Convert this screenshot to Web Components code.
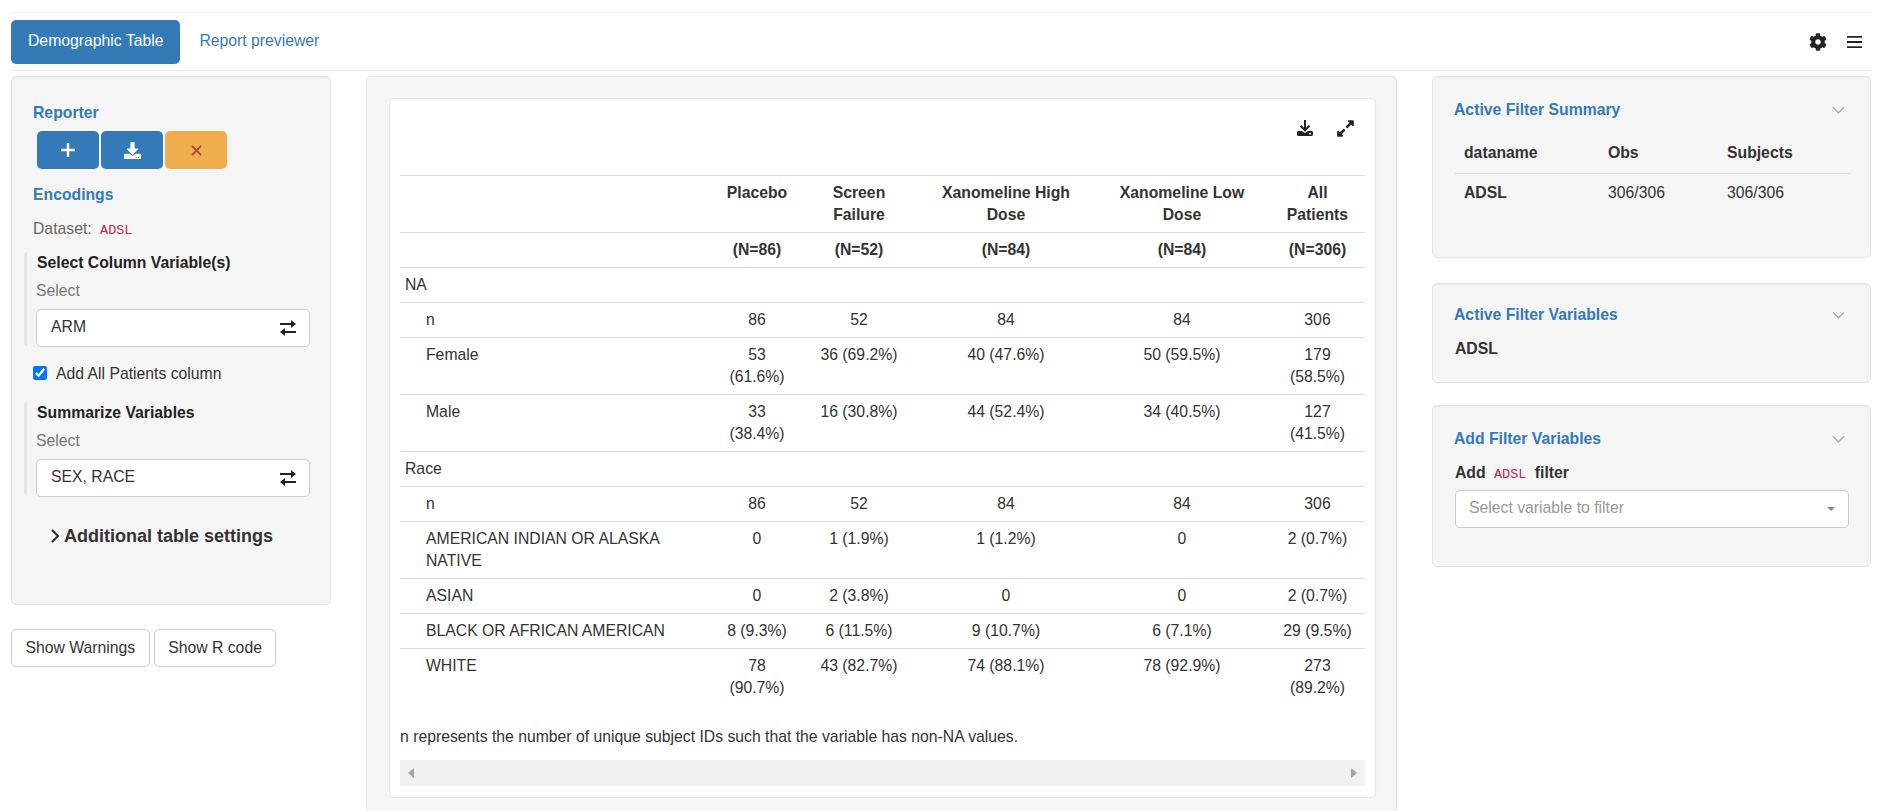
<!DOCTYPE html>
<html lang="en">
<head>
<meta charset="utf-8">
<title>Demographic Table</title>
<style>
  html, body { margin: 0; height: 811px; overflow: hidden; background: #fff; }
  body { font: 15.75px/22px "Liberation Sans", Arial, sans-serif; color: #333; }
</style>
</head>
<body>
<app-shell>
  <top-nav slot="nav">
    <nav-tab active>Demographic Table</nav-tab>
    <nav-tab>Report previewer</nav-tab>
  </top-nav>

  <well-box slot="left" class="encodings">
    <section-title>Reporter</section-title>
    <reporter-buttons></reporter-buttons>
    <section-title>Encodings</section-title>
    <dataset-line label="Dataset:" name="ADSL"></dataset-line>
    <var-select title="Select Column Variable(s)" value="ARM"></var-select>
    <check-line>Add All Patients column</check-line>
    <var-select title="Summarize Variables" value="SEX, RACE"></var-select>
    <more-settings>Additional table settings</more-settings>
  </well-box>
  <outline-button slot="left">Show Warnings</outline-button>
  <outline-button slot="left">Show R code</outline-button>

  <table-panel slot="main"></table-panel>

  <filter-card slot="right" title="Active Filter Summary" size="182" top="22" gap="25"><filter-summary></filter-summary></filter-card>
  <filter-card slot="right" title="Active Filter Variables" size="100" top="20" gap="22"><b>ADSL</b></filter-card>
  <filter-card slot="right" title="Add Filter Variables" size="162" top="22" gap="0"><add-filter></add-filter></filter-card>
</app-shell>

<script>
const ICONS = {
  download: `<svg viewBox="0 0 512 512"><path fill="currentColor" d="M216 0h80c13.3 0 24 10.7 24 24v168h87.7c17.8 0 26.7 21.5 14.1 34.1L269.7 378.3c-7.5 7.5-19.8 7.5-27.3 0L90.1 226.1c-12.6-12.6-3.7-34.1 14.1-34.1H192V24c0-13.3 10.7-24 24-24zm296 376v112c0 13.3-10.7 24-24 24H24c-13.3 0-24-10.7-24-24V376c0-13.3 10.7-24 24-24h146.7l49 49c20.1 20.1 52.5 20.1 72.6 0l49-49H488c13.3 0 24 10.7 24 24zm-124 88c0-11-9-20-20-20s-20 9-20 20 9 20 20 20 20-9 20-20zm64 0c0-11-9-20-20-20s-20 9-20 20 9 20 20 20 20-9 20-20z"/></svg>`,
  downloadThin: `<svg viewBox="0 0 16 16"><path fill="none" stroke="currentColor" stroke-width="2" d="M8 0v10M3.500 5.800L8 10.300l4.500-4.500"/><path fill="currentColor" fill-rule="evenodd" d="M1.500 11h3.300L8 13l3.200-2h3.300c.8 0 1.500.7 1.500 1.500v2c0 .8-.7 1.500-1.500 1.500h-13C.7 16 0 15.300 0 14.500v-2c0-.8.7-1.500 1.500-1.500zm11.500 1.800a.9.9 0 100 1.800.9.9 0 000-1.800z"/></svg>`,
  exchange: `<svg viewBox="0 0 16 16"><path fill="currentColor" d="M0 3h11V0l5 4-5 4V5H0zM16 11H5V8l-5 4 5 4v-3h11z"/></svg>`,
  cog: `<svg viewBox="0 0 512 512"><path fill="currentColor" d="M487.4 315.7l-42.6-24.6c4.3-23.2 4.3-47 0-70.2l42.6-24.6c4.9-2.8 7.1-8.6 5.5-14-11.1-35.6-30-67.8-54.7-94.6-3.8-4.1-10-5.1-14.8-2.3L380.8 110c-17.9-15.4-38.5-27.3-60.8-35.1V25.8c0-5.6-3.9-10.5-9.4-11.7-36.7-8.2-74.3-7.8-109.2 0-5.5 1.2-9.4 6.1-9.4 11.7V75c-22.2 7.9-42.8 19.8-60.8 35.1L88.7 85.5c-4.9-2.8-11-1.9-14.8 2.3-24.7 26.7-43.6 58.9-54.7 94.6-1.7 5.4.6 11.2 5.5 14L67.3 221c-4.3 23.2-4.3 47 0 70.2l-42.6 24.6c-4.9 2.8-7.1 8.6-5.5 14 11.1 35.6 30 67.8 54.7 94.6 3.8 4.1 10 5.1 14.8 2.3l42.6-24.6c17.9 15.4 38.5 27.3 60.8 35.1v49.2c0 5.6 3.9 10.5 9.4 11.7 36.7 8.2 74.3 7.8 109.2 0 5.5-1.2 9.4-6.1 9.4-11.7v-49.2c22.2-7.9 42.8-19.8 60.8-35.1l42.6 24.6c4.9 2.8 11 1.9 14.8-2.3 24.7-26.7 43.6-58.9 54.7-94.6 1.5-5.5-.7-11.3-5.6-14.1zM256 336c-44.1 0-80-35.9-80-80s35.9-80 80-80 80 35.9 80 80-35.9 80-80 80z"/></svg>`,
  expand: `<svg viewBox="0 0 448 512"><path fill="currentColor" d="M212.686 315.314L120 408l32.922 31.029c15.12 15.12 4.412 40.971-16.97 40.971h-112C10.697 480 0 469.255 0 456V344c0-21.382 25.803-32.09 40.922-16.971L72 360l92.686-92.686c6.248-6.248 16.379-6.248 22.627 0l25.373 25.373c6.249 6.248 6.249 16.378 0 22.627zm22.628-118.628L328 104l-32.922-31.029C279.958 57.851 290.666 32 312.048 32h112C437.303 32 448 42.745 448 56v112c0 21.382-25.803 32.09-40.922 16.971L376 152l-92.686 92.686c-6.248 6.248-16.379 6.248-22.627 0l-25.373-25.373c-6.249-6.248-6.249-16.378 0-22.627z"/></svg>`,
  bars: `<svg viewBox="0 0 16 14"><path fill="none" stroke="currentColor" stroke-width="2" d="M0 1.5h16M0 7h16M0 12.500h16"/></svg>`,
  plus: `<svg viewBox="0 0 14 14"><path fill="none" stroke="currentColor" stroke-width="2.400" d="M7 0v14M0 7h14"/></svg>`,
  times: `<svg viewBox="0 0 12 12"><path fill="none" stroke="currentColor" stroke-width="1.900" d="M1 1l10 10M11 1L1 11"/></svg>`,
  chevronDown: `<svg viewBox="0 0 14 8"><path fill="none" stroke="currentColor" stroke-width="1.300" d="M1 1l6 6 6-6"/></svg>`,
  chevronRight: `<svg viewBox="0 0 8 14"><path fill="none" stroke="currentColor" stroke-width="2.200" d="M1 1l6 6-6 6"/></svg>`,
};

class ShadowBase extends HTMLElement {
  connectedCallback() {
    if (!this.shadowRoot) this.attachShadow({ mode: "open" });
    this.shadowRoot.innerHTML = this.render();
  }
}

class AppShell extends ShadowBase {
  render() {
    return `<style>
      :host { display: block; padding: 12px 14px 0 11px; }
      .cols { display: grid; grid-template-columns: 320px 1031px 439px; column-gap: 35px; align-items: start; margin-top: 5px; }
    </style>
    <slot name="nav"></slot>
    <div class="cols">
      <div><slot name="left"></slot></div>
      <div><slot name="main"></slot></div>
      <div><slot name="right"></slot></div>
    </div>`;
  }
}

class TopNav extends ShadowBase {
  render() {
    return `<style>
      :host { display: flex; align-items: center; height: 59px; box-sizing: border-box; border-top: 1px solid #eee; border-bottom: 1px solid #e7e7e7; }
      .tabs { display: flex; gap: 2px; flex: 1; }
      .icons { display: flex; align-items: center; gap: 20px; padding-right: 10px; color: #222; }
      .cog { width: 18px; height: 18px; display: block; }
      .bars { width: 15px; height: 14px; display: block; }
      svg { display: block; width: 100%; height: 100%; }
    </style>
    <div class="tabs"><slot></slot></div>
    <div class="icons"><span class="cog">${ICONS.cog}</span><span class="bars">${ICONS.bars}</span></div>`;
  }
}

class NavTab extends ShadowBase {
  render() {
    return `<style>
      :host { display: block; padding: 10px 17px 12px; height: 22px; border-radius: 5px; color: #337ab7; }
      :host([active]) { background: #337ab7; color: #fff; }
    </style><slot></slot>`;
  }
}

class WellBox extends ShadowBase {
  render() {
    return `<style>
      :host { display: block; box-sizing: border-box; height: 529px; padding: 25px 24px 0 12px; background: #f5f5f5; border: 1px solid #e3e3e3; border-radius: 5px; box-shadow: inset 0 1px 1px rgba(0,0,0,.05); margin-bottom: 24px; }
    </style><slot></slot>`;
  }
}

class SectionTitle extends ShadowBase {
  render() {
    return `<style>
      :host { display: block; padding-left: 9px; font-weight: 700; color: #337ab7; line-height: 22px; }
    </style><slot></slot>`;
  }
}

class ReporterButtons extends ShadowBase {
  render() {
    return `<style>
      :host { display: flex; gap: 2px; margin: 7px 0 15px 13px; }
      div { width: 62px; height: 38px; border-radius: 5px; background: #337ab7; color: #fff; display: flex; align-items: center; justify-content: center; }
      div.warn { background: #f0ad4e; color: #a94442; }
      span { display: block; }
      svg { display: block; width: 100%; height: 100%; }
    </style>
    <div><span style="width:14px;height:14px">${ICONS.plus}</span></div>
    <div><span style="width:17px;height:17px">${ICONS.download}</span></div>
    <div class="warn"><span style="width:11px;height:11px">${ICONS.times}</span></div>`;
  }
}

class DatasetLine extends ShadowBase {
  render() {
    return `<style>
      :host { display: block; padding-left: 9px; color: #666; margin: 12px 0 -1px; line-height: 22px; }
      code { font: 13.500px "Liberation Mono", monospace; color: #c7254e; margin-left: 4px; }
    </style>${this.getAttribute("label")} <code>${this.getAttribute("name")}</code>`;
  }
}

class VarSelect extends ShadowBase {
  render() {
    return `<style>
      :host { display: block; box-sizing: border-box; height: 94px; margin-top: 13px; padding-left: 9px; border-left: 3px solid #e6e6e6; border-radius: 3px; }
      .title { font-weight: 700; line-height: 22px; padding-left: 1px; color: #222; }
      .label { color: #777; line-height: 22px; margin-top: 6px; }
      .box { display: flex; align-items: center; justify-content: space-between; box-sizing: border-box; height: 38px; width: 274px; margin-top: 7px; padding: 0 13px 0 14px; background: #fff; border: 1px solid #ccc; border-radius: 5px; }
      .val { position: relative; top: -1px; }
      .ico { width: 16px; height: 16px; color: #222; }
      svg { display: block; width: 100%; height: 100%; }
    </style>
    <div class="title">${this.getAttribute("title")}</div>
    <div class="label">Select</div>
    <div class="box"><span class="val">${this.getAttribute("value")}</span><span class="ico">${ICONS.exchange}</span></div>`;
  }
}

class CheckLine extends ShadowBase {
  render() {
    return `<style>
      :host { display: flex; align-items: center; height: 22px; margin: 16px 0 18px 9px; gap: 9px; }
      input { width: 14px; height: 14px; margin: 0; accent-color: #0075ff; }
      span { padding-top: 1px; }
    </style><input type="checkbox" checked><span><slot></slot></span>`;
  }
}

class MoreSettings extends ShadowBase {
  render() {
    return `<style>
      :host { display: flex; align-items: center; gap: 5px; margin: 28px 0 0 27px; font-size: 18px; font-weight: 700; line-height: 24px; color: #333; }
      span { width: 8px; height: 14px; display: block; }
      svg { display: block; width: 100%; height: 100%; }
    </style><span>${ICONS.chevronRight}</span><slot></slot>`;
  }
}

class OutlineButton extends ShadowBase {
  render() {
    return `<style>
      :host { display: inline-block; box-sizing: border-box; height: 38px; padding: 7px 13.5px; margin-right: 4px; background: #fff; border: 1px solid #ccc; border-radius: 5px; color: #333; }
    </style><slot></slot>`;
  }
}

const HEAD = [
  ["Placebo", "(N=86)"],
  ["Screen Failure", "(N=52)"],
  ["Xanomeline High Dose", "(N=84)"],
  ["Xanomeline Low Dose", "(N=84)"],
  ["All Patients", "(N=306)"],
];
const ROWS = [
  ["NA"],
  ["n", "86", "52", "84", "84", "306"],
  ["Female", "53 (61.6%)", "36 (69.2%)", "40 (47.6%)", "50 (59.5%)", "179 (58.5%)"],
  ["Male", "33 (38.4%)", "16 (30.8%)", "44 (52.4%)", "34 (40.5%)", "127 (41.5%)"],
  ["Race"],
  ["n", "86", "52", "84", "84", "306"],
  ["AMERICAN INDIAN OR ALASKA NATIVE", "0", "1 (1.9%)", "1 (1.2%)", "0", "2 (0.7%)"],
  ["ASIAN", "0", "2 (3.8%)", "0", "0", "2 (0.7%)"],
  ["BLACK OR AFRICAN AMERICAN", "8 (9.3%)", "6 (11.5%)", "9 (10.7%)", "6 (7.1%)", "29 (9.5%)"],
  ["WHITE", "78 (90.7%)", "43 (82.7%)", "74 (88.1%)", "78 (92.9%)", "273 (89.2%)"],
];

class DemoTable extends ShadowBase {
  render() {
    const head = HEAD.map(h => `<th>${h[0]}</th>`).join("");
    const ns = HEAD.map(h => `<th>${h[1]}</th>`).join("");
    const rows = ROWS.map(r => r.length === 1
      ? `<tr><td class="group" colspan="6">${r[0]}</td></tr>`
      : `<tr><td class="label">${r[0]}</td>${r.slice(1).map(c => `<td>${c}</td>`).join("")}</tr>`).join("");
    return `<style>
      :host { display: block; }
      table { table-layout: fixed; width: 965px; border-collapse: collapse; color: #333; }
      th, td { box-sizing: border-box; padding: 6px 9px; line-height: 22px; text-align: center; vertical-align: top; border-top: 1px solid #ddd; }
      td.group { text-align: left; padding-left: 5px; }
      td.label { text-align: left; padding-left: 26px; padding-right: 30px; }
    </style>
    <table>
      <colgroup><col style="width:314px"><col style="width:86px"><col style="width:118px"><col style="width:176px"><col style="width:176px"><col style="width:95px"></colgroup>
      <thead><tr><th></th>${head}</tr><tr><th></th>${ns}</tr></thead>
      <tbody>${rows}</tbody>
    </table>`;
  }
}

class TablePanel extends ShadowBase {
  render() {
    return `<style>
      :host { display: block; box-sizing: border-box; height: 760px; padding: 22px 21px 22px 23px; background: #f5f5f5; border: 1px solid #e3e3e3; border-radius: 5px; }
      .card { box-sizing: border-box; height: 698px; padding: 21px 10px 0; background: #fff; border-radius: 4px; box-shadow: 0 0 2px rgba(0,0,0,.2); }
      .tools { display: flex; justify-content: flex-end; gap: 23px; height: 55px; padding-right: 10px; color: #222; }
      .tools span { display: block; height: 19px; }
      .tools .dl { width: 16px; height: 16px; }
      .tools .ex { width: 19px; margin-top: -1px; }
      svg { display: block; width: 100%; height: 100%; overflow: visible; }
      .note { margin-top: 21px; }
      .scroll { display: flex; justify-content: space-between; align-items: center; height: 26px; margin-top: 12px; padding: 0 8px; background: #f1f1f1; }
      .scroll i { width: 0; height: 0; border: 5px solid transparent; }
      .scroll .l { border-right: 6px solid #a3a3a3; border-left: 0; }
      .scroll .r { border-left: 6px solid #a3a3a3; border-right: 0; }
    </style>
    <div class="card">
      <div class="tools"><span class="dl">${ICONS.downloadThin}</span><span class="ex">${ICONS.expand}</span></div>
      <demo-table></demo-table>
      <div class="note">n represents the number of unique subject IDs such that the variable has non-NA values.</div>
      <div class="scroll"><i class="l"></i><i class="r"></i></div>
    </div>`;
  }
}

class FilterCard extends ShadowBase {
  render() {
    return `<style>
      :host { display: block; box-sizing: border-box; height: ${this.getAttribute("size")}px; margin-bottom: ${this.getAttribute("gap")}px; padding: ${this.getAttribute("top")}px 21px 0 22px; background: #f5f5f5; border: 1px solid #e3e3e3; border-radius: 5px; box-shadow: inset 0 1px 1px rgba(0,0,0,.05); }
      .head { display: flex; justify-content: space-between; align-items: center; height: 22px; margin-bottom: 12px; font-weight: 700; color: #337ab7; }
      .head b { margin-left: -1px; }
      .chev { width: 13px; height: 8px; margin-right: 4px; color: #aaa; }
      svg { display: block; width: 100%; height: 100%; }
    </style>
    <div class="head"><b>${this.getAttribute("title")}</b><span class="chev">${ICONS.chevronDown}</span></div>
    <slot></slot>`;
  }
}

class FilterSummary extends ShadowBase {
  render() {
    return `<style>
      :host { display: block; padding-top: 4px; }
      .row { display: grid; grid-template-columns: 144px 119px 1fr; padding: 0 9px; height: 22px; align-items: center; width: 377px; }
      .row.h { font-weight: 700; height: 31px; border-bottom: 1px solid #ddd; padding-bottom: 5px; }
      .row.b { margin-top: 8px; }
    </style>
    <div class="row h"><span>dataname</span><span>Obs</span><span>Subjects</span></div>
    <div class="row b"><b>ADSL</b><span>306/306</span><span>306/306</span></div>`;
  }
}

class AddFilter extends ShadowBase {
  render() {
    return `<style>
      :host { display: block; }
      .t { font-weight: 700; height: 22px; margin-bottom: -1px; }
      code { font: 400 13.500px "Liberation Mono", monospace; color: #c7254e; margin: 0 4px; }
      .sel { display: flex; justify-content: space-between; align-items: center; box-sizing: border-box; height: 38px; margin-top: 7px; padding: 0 14px 2px 13px; background: #fff; border: 1px solid #ccc; border-radius: 5px; color: #999; }
      i { width: 0; height: 0; border: 4px solid transparent; border-top-color: #888; border-bottom: 0; margin: 2px -1px 0 0; }
    </style>
    <div class="t">Add <code>ADSL</code> filter</div>
    <div class="sel"><span>Select variable to filter</span><i></i></div>`;
  }
}

customElements.define("app-shell", AppShell);
customElements.define("top-nav", TopNav);
customElements.define("nav-tab", NavTab);
customElements.define("well-box", WellBox);
customElements.define("section-title", SectionTitle);
customElements.define("reporter-buttons", ReporterButtons);
customElements.define("dataset-line", DatasetLine);
customElements.define("var-select", VarSelect);
customElements.define("check-line", CheckLine);
customElements.define("more-settings", MoreSettings);
customElements.define("outline-button", OutlineButton);
customElements.define("demo-table", DemoTable);
customElements.define("table-panel", TablePanel);
customElements.define("filter-card", FilterCard);
customElements.define("filter-summary", FilterSummary);
customElements.define("add-filter", AddFilter);
</script>
</body>
</html>
